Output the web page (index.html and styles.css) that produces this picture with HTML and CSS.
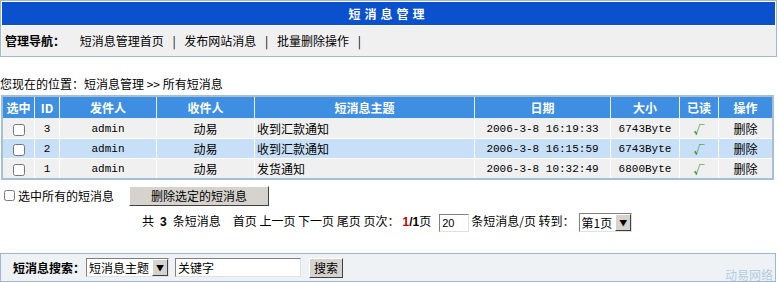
FILE: index.html
```html
<!DOCTYPE html>
<html lang="zh-CN">
<head>
  <meta charset="UTF-8">
  <title>短消息管理</title>
  <link rel="stylesheet" href="styles.css">
</head>
<body>

  <div class="panel">
    <div class="title">短消息管理</div>
    <div class="nav">
      <strong>管理导航：</strong>
      <a href="#">短消息管理首页</a> |
      <a href="#">发布网站消息</a> |
      <a href="#">批量删除操作</a> |
    </div>
  </div>

  <div class="crumb">您现在的位置：短消息管理 &gt;&gt; 所有短消息</div>

  <table class="msgs">
    <tr>
      <th class="c-sel">选中</th>
      <th class="c-id">ID</th>
      <th class="c-from">发件人</th>
      <th class="c-to">收件人</th>
      <th class="c-subj">短消息主题</th>
      <th class="c-date">日期</th>
      <th class="c-size">大小</th>
      <th class="c-read">已读</th>
      <th class="c-op">操作</th>
    </tr>
    <tr class="odd">
      <td><input type="checkbox"></td>
      <td class="mono">3</td>
      <td class="mono">admin</td>
      <td>动易</td>
      <td class="left">收到汇款通知</td>
      <td class="mono">2006-3-8 16:19:33</td>
      <td class="mono">6743Byte</td>
      <td class="tick">√</td>
      <td><a href="#">删除</a></td>
    </tr>
    <tr class="even">
      <td><input type="checkbox"></td>
      <td class="mono">2</td>
      <td class="mono">admin</td>
      <td>动易</td>
      <td class="left">收到汇款通知</td>
      <td class="mono">2006-3-8 16:15:59</td>
      <td class="mono">6743Byte</td>
      <td class="tick">√</td>
      <td><a href="#">删除</a></td>
    </tr>
    <tr class="odd">
      <td><input type="checkbox"></td>
      <td class="mono">1</td>
      <td class="mono">admin</td>
      <td>动易</td>
      <td class="left">发货通知</td>
      <td class="mono">2006-3-8 10:32:49</td>
      <td class="mono">6800Byte</td>
      <td class="tick">√</td>
      <td><a href="#">删除</a></td>
    </tr>
  </table>

  <div class="actions">
    <label class="all"><input type="checkbox">选中所有的短消息</label>
    <button class="del">删除选定的短消息</button>
  </div>

  <div class="pager">共<b class="num">3</b>条短消息<span class="gap"></span>首页 上一页 下一页 尾页 页次：<b class="cur">1</b><b>/1</b>页<input class="per" type="text" value="20">条短消息/页 转到：<span class="jump">第1页<i class="arrow">▼</i></span></div>

  <div class="search">
    <strong>短消息搜索：</strong>
    <span class="field">短消息主题<i class="arrow">▼</i></span>
    <input class="kw" type="text" value="关键字">
    <button class="go">搜索</button>
    <span class="mark">动易网络</span>
  </div>

</body>
</html>
```

FILE: styles.css
```css
body {
  margin: 0;
  font-family: "Noto Sans CJK SC", "Liberation Sans", sans-serif;
  font-size: 12px;
  color: #000;
  background: #fff;
  width: 780px;
  height: 282px;
  position: relative;
  overflow: hidden;
}
a {
  color: #000;
  text-decoration: none;
}
.panel {
  width: 774px;
  border: 1px solid #9cb8d4;
  padding: 1px 0 0 1px;
}
.title {
  background: #0b50cd;
  color: #fff;
  font-weight: bold;
  height: 23px;
  line-height: 23px;
  text-align: center;
  letter-spacing: 4px;
  margin-right: 1px;
}
.nav {
  background: #f1f0f0;
  height: 30px;
  line-height: 29px;
  padding-left: 3px;
  border-top: 1px solid #fff;
}
.nav strong {
  margin-right: 6px;
}
.nav a {
  margin: 0 6px;
}
.crumb {
  margin-top: 18px;
  height: 20px;
  line-height: 18px;
}
.msgs {
  border-collapse: collapse;
  width: 773px;
  margin-left: 1px;
  border: 2px solid #a4bfd6;
}
.msgs th {
  background: #3e8ee2;
  color: #fff;
  height: 21px;
  padding: 0;
  border: 1px solid #e8f0f8;
}
.msgs td {
  height: 19px;
  line-height: 16px;
  padding: 0;
  text-align: center;
  border: 1px solid #fff;
}
.c-sel { width: 31px; }
.c-id { width: 24px; }
.c-from { width: 96px; }
.c-to { width: 97px; }
.c-subj { width: 219px; }
.c-date { width: 135px; }
.c-size { width: 68px; }
.c-read { width: 38px; }
.odd td { background: #f0f0f0; }
.even td { background: #c7e0f8; }
.msgs td.left { text-align: left; padding-left: 2px; }
.mono {
  font-family: "Liberation Mono", monospace;
  font-size: 11px;
}
.tick {
  color: #1f8a2a;
  font-weight: bold;
  font-size: 11px;
}
.msgs input {
  margin: 0;
  width: 12px;
  height: 12px;
  vertical-align: middle;
}
.actions {
  display: flex;
  align-items: center;
  margin-top: 5px;
  height: 21px;
}
.all {
  display: flex;
  align-items: center;
  padding-left: 4px;
}
.all input {
  margin: 0 3px 0 0;
  width: 11px;
  height: 11px;
}
.del {
  margin-left: 15px;
  width: 140px;
  height: 20px;
  background: #d6d3ce;
  border: 1px solid;
  border-color: #fff #404040 #404040 #fff;
  font: inherit;
  padding: 0;
}
.pager {
  margin-top: 4px;
  padding-left: 142px;
  height: 22px;
  line-height: 22px;
  white-space: nowrap;
}
.pager b {
  font-family: "Liberation Sans", sans-serif;
}
.pager .num {
  margin: 0 6px;
}
.pager .gap {
  display: inline-block;
  width: 12px;
}
.pager .cur {
  color: #c00000;
  margin-left: 3px;
}
.per {
  width: 24px;
  height: 16px;
  margin: 0 2px 0 8px;
  padding: 0 2px;
  border: 1px solid;
  border-color: #808080 #e0e0e0 #e0e0e0 #808080;
  font: 11px "Liberation Sans", sans-serif;
  vertical-align: middle;
}
.jump, .field {
  display: inline-flex;
  align-items: center;
  height: 17px;
  line-height: 17px;
  border: 1px solid;
  border-color: #808080 #e0e0e0 #e0e0e0 #808080;
  padding-left: 2px;
  background: #fff;
  vertical-align: middle;
}
.jump {
  margin-left: 4px;
}
.arrow {
  font-style: normal;
  font-size: 8px;
  width: 14px;
  height: 15px;
  line-height: 15px;
  text-align: center;
  margin-left: 3px;
  background: #d6d3ce;
  border: 1px solid;
  border-color: #fff #404040 #404040 #fff;
}
.search {
  position: absolute;
  left: 0;
  top: 253px;
  width: 774px;
  height: 27px;
  background: #eef2f5;
  border: 1px solid #9cb8d4;
  display: flex;
  align-items: center;
}
.search strong {
  margin-left: 12px;
}
.field {
  margin-left: 1px;
}
.kw {
  margin-left: 6px;
  width: 120px;
  height: 15px;
  padding: 1px 2px;
  border: 1px solid;
  border-color: #808080 #e0e0e0 #e0e0e0 #808080;
  font: inherit;
}
.go {
  margin-left: 8px;
  width: 34px;
  height: 20px;
  background: #d6d3ce;
  border: 1px solid;
  border-color: #fff #404040 #404040 #fff;
  font: inherit;
  padding: 0;
}
.mark {
  position: absolute;
  right: 2px;
  bottom: -2px;
  color: #b4cbe0;
}
```
